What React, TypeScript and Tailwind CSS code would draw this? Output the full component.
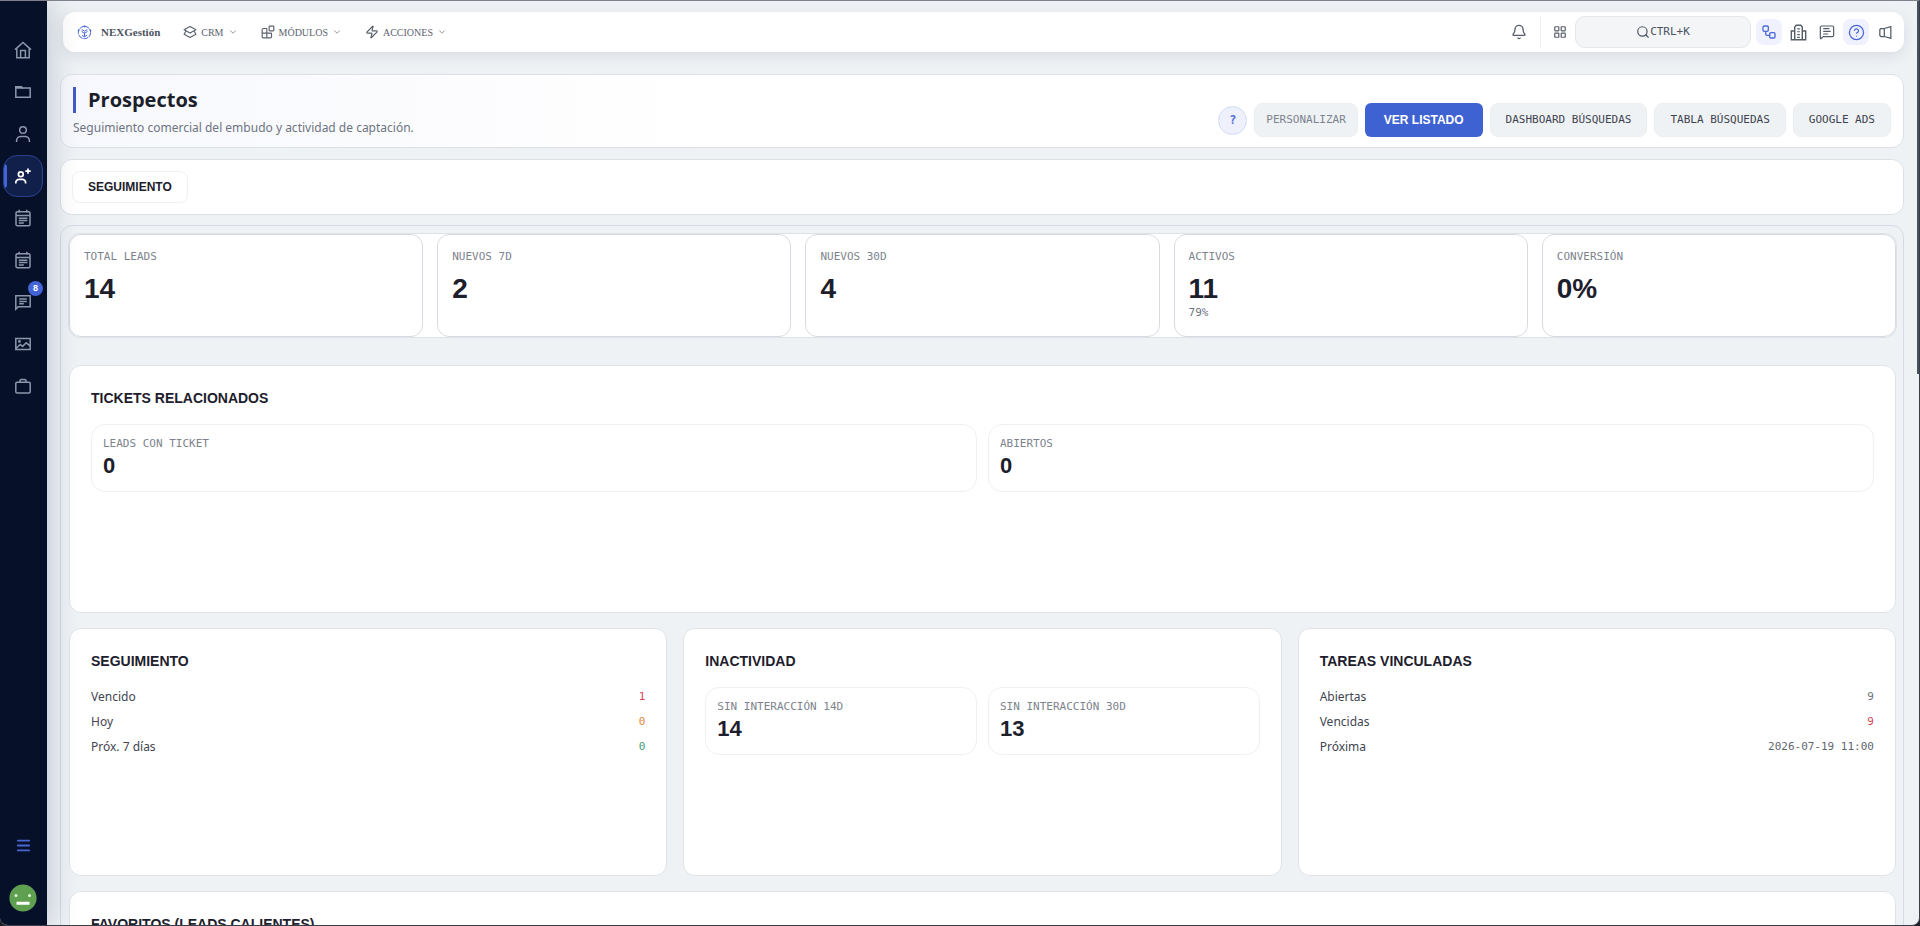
import React from 'react'
import { Bell, Blocks, ChevronDown, CircleHelp, LayoutGrid, Menu, MessageSquareText, Search, Workflow, Zap } from 'lucide-react'

const MONO = "font-['DejaVu_Sans_Mono',monospace]"
const SANS = "font-['Liberation_Sans',Arial,sans-serif]"

const kpis = [
  { label: 'TOTAL LEADS', value: '14' },
  { label: 'NUEVOS 7D', value: '2' },
  { label: 'NUEVOS 30D', value: '4' },
  { label: 'ACTIVOS', value: '11', note: '79%' },
  { label: 'CONVERSIÓN', value: '0%' },
]

const seguimiento = [
  { label: 'Vencido', value: '1', color: 'text-[#d6455a]' },
  { label: 'Hoy', value: '0', color: 'text-[#e08a3c]' },
  { label: 'Próx. 7 días', value: '0', color: 'text-[#3f9d78]' },
]

const tareas = [
  { label: 'Abiertas', value: '9', color: 'text-[#6b7280]' },
  { label: 'Vencidas', value: '9', color: 'text-[#d6455a]' },
  { label: 'Próxima', value: '2026-07-19 11:00', color: 'text-[#5f6671]' },
]

function Svg({ size = 18, children }: { size?: number; children: React.ReactNode }) {
  return (
    <svg width={size} height={size} viewBox="0 0 18 18" fill="none" stroke="currentColor" strokeWidth="1.5" aria-hidden="true">
      {children}
    </svg>
  )
}

const HomeIcon = () => (
  <Svg>
    <path d="M1 8.6 9 1.4l8 7.2" />
    <path d="M2.8 7.4v9.4h12.4V7.4M6.6 16.8V9.6h4.8v7.2" />
  </Svg>
)

const FolderIcon = () => (
  <Svg>
    <path d="M1.8 4v10.2h14.4V5H8.4L7.4 4H1.8Z" />
    <path d="M1.8 3.8h5.6l.8 1.2H1.8z" fill="currentColor" />
  </Svg>
)

const UserIcon = () => (
  <Svg>
    <circle cx="9" cy="5" r="3.3" />
    <path d="M2.6 17v-1.4a4.4 4.4 0 0 1 4.4-4.2h4a4.4 4.4 0 0 1 4.4 4.2V17" />
  </Svg>
)

const UserPlusIcon = () => (
  <Svg>
    <circle cx="6.8" cy="7.2" r="2.4" strokeWidth="1.7" />
    <path d="M1.8 16.6v-1a3.2 3.2 0 0 1 3.2-3.2h3.4a3.2 3.2 0 0 1 3.2 3.2v1" strokeWidth="1.7" />
    <path d="M14 1.4v5.4M11.3 4.1h5.4" strokeWidth="1.7" />
  </Svg>
)

const NoteIcon = () => (
  <Svg>
    <rect x="2" y="2.8" width="14" height="14" rx="1.4" />
    <path d="M5.2 .8v2.6M12.8 .8v2.6M2 6.4h14M4.8 9.2h8.6M4.8 11.6h8.6M4.8 14h5" />
  </Svg>
)

const ChatIcon = () => (
  <Svg>
    <path d="M1.8 16V2.8h14.4v11H4.2L1.8 16.2ZM5.2 6h7.6M5.2 8.4h7.6M5.2 10.8h4.6" />
  </Svg>
)

const ImageIcon = () => (
  <Svg>
    <path d="M1.8 3.4h14.4v11.2H1.8zM2.4 13l3.8-3.6 2.4 2 3.6-3.6 3.8 3" />
    <circle cx="5.4" cy="6.4" r="0.7" fill="currentColor" />
  </Svg>
)

const CaseIcon = () => (
  <Svg>
    <rect x="1.8" y="5.2" width="14.4" height="10.8" rx="1.2" />
    <path d="M6 5V3.4l1-1h4l1 1V5" />
  </Svg>
)

const StackIcon = () => (
  <Svg size={14}>
    <path d="M9 1.8 16.6 6 9 10.2 1.4 6 9 1.8ZM3.6 8 1.4 11.8 9 16l7.6-4.2L14.4 8" strokeLinejoin="round" />
  </Svg>
)

const BuildingIcon = () => (
  <Svg size={17}>
    <path d="M5 16.6V3.2L6.6 1.4h4.8L13 3.2v13.4M5 7.4H1.4v9.2h15.2V7.4H13" />
    <path d="M7.6 5.2h2.8M7.6 8.2h2.8M7.6 11.2h2.8M7.6 14.2h2.8" strokeWidth="1.2" />
  </Svg>
)

const HornIcon = () => (
  <Svg size={15}>
    <path d="M7.6 4.2 15.4 2v14l-7.8-2.2H3.4L2.2 12.6V5.4l1.2-1.2h4.2ZM7.6 4.2v9.6" />
  </Svg>
)

const LogoIcon = () => (
  <svg width="15" height="15" viewBox="0 0 18 18" fill="none" stroke="#4a66dd" strokeWidth="1.2" aria-hidden="true">
    <circle cx="9" cy="9" r="7.4" strokeDasharray="6 .8" />
    <path d="M9 9v5M9 10 5.4 7.6M9 10l3.6-2.4M6 12.4l3 1.8 3-1.8M5.6 5.6 9 7.4l3.4-1.8" />
    <path d="M9 .6v2M1 6l1.6.6M17 6l-1.6.6" strokeWidth="1.8" />
  </svg>
)

const sideItems = [
  { name: 'Inicio', icon: <HomeIcon /> },
  { name: 'Carpetas', icon: <FolderIcon /> },
  { name: 'Clientes', icon: <UserIcon /> },
  { name: 'Prospectos', icon: <UserPlusIcon />, active: true },
  { name: 'Agenda', icon: <NoteIcon /> },
  { name: 'Notas', icon: <NoteIcon /> },
  { name: 'Mensajes', icon: <ChatIcon />, badge: '8' },
  { name: 'Galería', icon: <ImageIcon /> },
  { name: 'Cartera', icon: <CaseIcon /> },
]

const menus = [
  { label: 'CRM', icon: <StackIcon /> },
  { label: 'MÓDULOS', icon: <Blocks size={14} strokeWidth={2} /> },
  { label: 'ACCIONES', icon: <Zap size={14} strokeWidth={2} /> },
]

const tools = [
  { name: 'Flujos', icon: <Workflow size={16} strokeWidth={2} />, on: true },
  { name: 'Empresa', icon: <BuildingIcon /> },
  { name: 'Comentarios', icon: <MessageSquareText size={16} strokeWidth={1.8} /> },
  { name: 'Ayuda', icon: <CircleHelp size={17} strokeWidth={1.8} />, on: true },
  { name: 'Anuncios', icon: <HornIcon /> },
]

function Sidebar() {
  return (
    <aside className="relative z-10 flex w-[47px] shrink-0 flex-col items-center bg-[#061029] pt-7 pr-px pb-[13px] shadow-[4px_0_28px_rgba(20,35,80,0.2)]">
      <nav className="flex flex-col">
        {sideItems.map((item) => (
          <a
            key={item.name}
            href="#"
            aria-label={item.name}
            className={
              item.active
                ? 'relative flex h-[42px] w-10 items-center justify-center overflow-hidden rounded-[14px] border border-[#2b438f] bg-[#10204a] text-white'
                : 'relative flex h-[42px] w-10 items-center justify-center text-[#8d96ab]'
            }
          >
            {item.active && <span className="absolute inset-y-2 left-0 w-[3px] rounded-r bg-[#4464d8]" />}
            {item.icon}
            {item.badge && (
              <span className={`${SANS} absolute top-0 right-0 flex size-[15px] items-center justify-center rounded-full bg-[#4464d8] text-[9px] font-bold text-white`}>
                {item.badge}
              </span>
            )}
          </a>
        ))}
      </nav>
      <button aria-label="Menú" className="mt-auto mb-[30px] text-[#4a66d4]">
        <Menu size={17} strokeWidth={2.5} />
      </button>
      <svg width="28" height="28" viewBox="0 0 28 28" role="img" aria-label="Perfil">
        <circle cx="14" cy="14" r="13.6" fill="#5f9f50" />
        <path d="M5.5 11.6h3M7 10.1v3M19 11.6h3M20.5 10.1v3" stroke="#d9f0d2" strokeWidth="1.6" />
        <path d="M7.5 19.2h13" stroke="#fff" strokeWidth="3" />
      </svg>
    </aside>
  )
}

function TopBar() {
  return (
    <header className="ml-[3px] flex h-10 items-center rounded-xl bg-white pr-1.5 pl-3.5 shadow-[0_4px_14px_rgba(30,40,60,0.1)]">
      <a href="#" className="flex items-center gap-[9px] font-['Liberation_Serif',serif] text-[11px] font-bold text-[#4b5261]">
        <LogoIcon />
        NEXGestión
      </a>
      <nav className="ml-[23px] flex items-center gap-[23px] font-['Liberation_Serif',serif] text-[10px] text-[#5b6270]">
        {menus.map((m) => (
          <button key={m.label} className="flex items-center gap-1">
            {m.icon}
            {m.label}
            <ChevronDown size={10} strokeWidth={2} className="text-[#7d838f]" />
          </button>
        ))}
      </nav>
      <div className="ml-auto flex items-center text-[#555c6a]">
        <button aria-label="Notificaciones"><Bell size={16} strokeWidth={2} /></button>
        <span className="mr-3 ml-[13px] h-8 w-px bg-[#eceef1]" />
        <button aria-label="Aplicaciones"><LayoutGrid size={14} strokeWidth={2} /></button>
        <button className={`${MONO} ml-2 flex h-8 w-44 items-center justify-center rounded-[10px] border border-[#e3e7ea] bg-[#f3f5f7] text-[11px] text-[#4b5261]`}>
          <Search size={14} strokeWidth={2} />
          CTRL+K
        </button>
        <div className="ml-[5px] flex gap-[3px]">
          {tools.map((t) => (
            <button
              key={t.name}
              aria-label={t.name}
              className={
                t.on
                  ? 'flex size-[26px] items-center justify-center rounded-lg bg-[#eff1fc] text-[#4a68da]'
                  : 'flex size-[26px] items-center justify-center rounded-lg'
              }
            >
              {t.icon}
            </button>
          ))}
        </div>
      </div>
    </header>
  )
}

function PageHeader() {
  const plain = `${MONO} h-[34px] rounded-lg border border-[#eceff2] bg-[#eff2f5] px-[15px] text-[11px] text-[#3d434e]`
  return (
    <section className="mt-[22px] flex items-end justify-between rounded-xl border border-[#dbe0e7] bg-white bg-linear-to-r from-[#f7f8fd] to-white to-35% px-3 pt-3 pb-2.5">
      <div>
        <h1 className="flex h-[26px] items-center border-l-[3px] border-[#3f5cc8] pl-3 text-[20px] font-bold text-[#1b1e2b]">Prospectos</h1>
        <p className="mt-1.5 font-['Noto_Sans',sans-serif] text-[12px] leading-[18px] text-[#6d7480]">Seguimiento comercial del embudo y actividad de captación.</p>
      </div>
      <div className="flex items-center gap-[7px]">
        <button aria-label="Ayuda de prospectos" className={`${MONO} size-[29px] rounded-full border border-[#d3dbf5] bg-[#eef1fb] text-[12px] font-bold text-[#5570dc]`}>?</button>
        <button className={`${MONO} h-[34px] rounded-lg border border-[#eceff2] bg-[#eff2f5] px-[11px] text-[11px] text-[#7b828d]`}>PERSONALIZAR</button>
        <button className={`${SANS} h-[34px] rounded-md bg-[#3f62d3] px-[19px] text-[12px] font-bold text-white`}>VER LISTADO</button>
        <button className={plain}>DASHBOARD BÚSQUEDAS</button>
        <button className={plain}>TABLA BÚSQUEDAS</button>
        <button className={plain}>GOOGLE ADS</button>
      </div>
    </section>
  )
}

function Panel({ title, children }: { title: string; children?: React.ReactNode }) {
  return (
    <section className="h-[248px] rounded-xl border border-[#dfe4e9] bg-white px-[21px] pt-[22px]">
      <h2 className={`${SANS} mb-4 text-[14px] leading-5 font-bold text-[#1d202c]`}>{title}</h2>
      {children}
    </section>
  )
}

function MiniStat({ label, value }: { label: string; value: string }) {
  return (
    <div className="h-[68px] flex-1 rounded-[14px] border border-[#eef0f2] px-[11px] pt-[11px]">
      <p className={`${MONO} text-[11px] leading-4 text-[#7d838d]`}>{label}</p>
      <p className={`${SANS} text-[22px] leading-7 font-bold text-[#1d202c]`}>{value}</p>
    </div>
  )
}

function Rows({ rows }: { rows: typeof seguimiento }) {
  return (
    <dl className="flex flex-col gap-[5px]">
      {rows.map((r) => (
        <div key={r.label} className="flex items-center justify-between leading-5">
          <dt className="font-['Noto_Sans',sans-serif] text-[12px] text-[#3f4550]">{r.label}</dt>
          <dd className={`${MONO} text-[11px] ${r.color}`}>{r.value}</dd>
        </div>
      ))}
    </dl>
  )
}

export default function App() {
  return (
    <div className="h-screen overflow-hidden bg-[#1d2028] font-['Open_Sans','Noto_Sans',sans-serif]">
      <div className="relative flex h-full overflow-hidden rounded-b-lg border-t border-r border-b border-t-[#7f828c] border-r-[#3a3e48] border-b-[#3a3e48] bg-[#eef2f5]">
        <Sidebar />
        <main className="min-w-0 flex-1 overflow-hidden pt-[11px] pr-[15px] pl-[13px]">
          <TopBar />
          <PageHeader />
          <section className="mt-[11px] rounded-xl border border-[#dbe0e7] bg-white px-[11px] py-[11px]">
            <button className={`${SANS} h-8 rounded-lg border border-[#eff1f3] px-[15px] text-[12px] font-bold text-[#1d202c]`}>SEGUIMIENTO</button>
          </section>

          <div className="mt-[10px] rounded-xl border border-[#d5dbe4] p-2 pr-[7px]">
            <div className="grid grid-cols-5 gap-3.5 rounded-xl bg-white ring-1 ring-[#dde2e8]">
              {kpis.map((k) => (
                <div key={k.label} className="h-[103px] rounded-xl border border-[#d6dbe1] bg-white px-3.5 pt-3.5">
                  <p className={`${MONO} text-[11px] leading-4 text-[#7d838d]`}>{k.label}</p>
                  <p className={`${SANS} mt-1.5 text-[28px] leading-9 font-bold text-[#1d202c]`}>{k.value}</p>
                  {k.note && <p className={`${MONO} text-[11px] leading-3 text-[#6b7280]`}>{k.note}</p>}
                </div>
              ))}
            </div>

            <div className="mt-7 grid grid-cols-3 gap-x-4 gap-y-[15px]">
              <div className="col-span-3">
                <Panel title="TICKETS RELACIONADOS">
                  <div className="flex gap-[11px]">
                    <MiniStat label="LEADS CON TICKET" value="0" />
                    <MiniStat label="ABIERTOS" value="0" />
                  </div>
                </Panel>
              </div>
              <Panel title="SEGUIMIENTO">
                <Rows rows={seguimiento} />
              </Panel>
              <Panel title="INACTIVIDAD">
                <div className="flex gap-[11px]">
                  <MiniStat label="SIN INTERACCIÓN 14D" value="14" />
                  <MiniStat label="SIN INTERACCIÓN 30D" value="13" />
                </div>
              </Panel>
              <Panel title="TAREAS VINCULADAS">
                <Rows rows={tareas} />
              </Panel>
              <div className="col-span-3">
                <Panel title="FAVORITOS (LEADS CALIENTES)" />
              </div>
            </div>
          </div>
        </main>
        {/* scroll thumb */}
        <span className="absolute top-0 right-0 h-[373px] w-0.5 bg-[#4a4f5c]" />
      </div>
    </div>
  )
}
